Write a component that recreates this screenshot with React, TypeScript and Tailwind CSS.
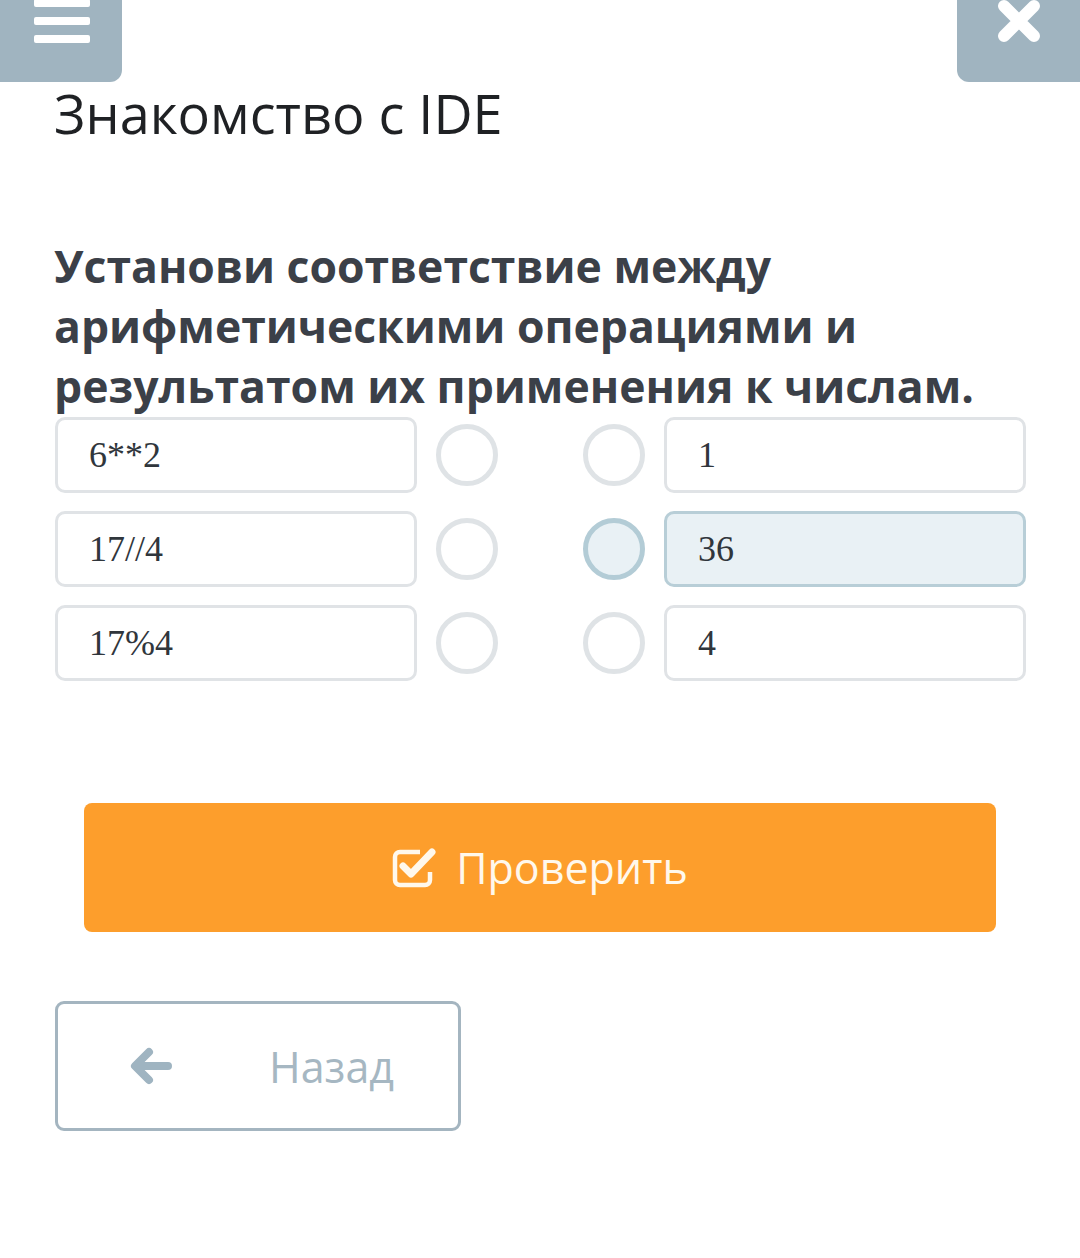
import React from 'react';

const rows = [
  { left: '6**2', right: '1', active: false },
  { left: '17//4', right: '36', active: true },
  { left: '17%4', right: '4', active: false },
];

function Circle({ active }: { active: boolean }) {
  return (
    <div
      className={`w-[62px] h-[62px] shrink-0 rounded-full border-[5px] ${
        active ? 'border-[#b3ccd6] bg-[#e9f1f5]' : 'border-[#dfe3e6] bg-white'
      }`}
    />
  );
}

function Cell({ text, active }: { text: string; active: boolean }) {
  return (
    <div
      className={`w-[362px] h-[76px] shrink-0 flex items-center pl-[31px] rounded-[10px] border-[3px] text-[36px] text-[#30363c] ${
        active ? 'border-[#b8ced7] bg-[#e9f1f5]' : 'border-[#e0e3e6] bg-white'
      }`}
      style={{ fontFamily: '"Liberation Serif", serif' }}
    >
      {text}
    </div>
  );
}

export default function App() {
  return (
    <div
      className="w-[1080px] min-h-[1258px] bg-white"
      style={{ fontFamily: '"Open Sans", sans-serif' }}
    >
      {/* top bar */}
      <div className="flex justify-between">
        <div className="w-[122px] h-[82px] bg-[#a0b4c0] rounded-br-[12px] flex flex-col items-center gap-[10px]">
          <div className="w-[56px] h-[8px] -mt-[1px] bg-white rounded-[2px] ml-[2px]" />
          <div className="w-[56px] h-[8px] bg-white rounded-[2px] ml-[2px]" />
          <div className="w-[56px] h-[8px] bg-white rounded-[2px] ml-[2px]" />
        </div>
        <div className="w-[123px] h-[82px] bg-[#a0b4c0] rounded-bl-[12px] flex justify-center">
          <svg width="50" height="50" viewBox="0 0 50 50" className="-mt-[1px]">
            <path d="M10 7 L40 37 M40 7 L10 37" stroke="#fff" strokeWidth="12" strokeLinecap="round" />
          </svg>
        </div>
      </div>

      <div className="px-[54px]">
        <h1 className="mt-[1px] text-[54px] leading-[60px] font-normal text-[#1f2124]">
          Знакомство с IDE
        </h1>

        <p className="mt-[93px] text-[44.5px] leading-[60px] font-bold text-[#3b4048] w-[972px]">
          Установи соответствие между арифметическими операциями и результатом их применения к числам.
        </p>
      </div>

      <div className="pl-[55px] mt-[1px] flex flex-col gap-[18px]">
        {rows.map((r) => (
          <div key={r.left} className="flex items-center">
            <Cell text={r.left} active={false} />
            <div className="ml-[19px]">
              <Circle active={false} />
            </div>
            <div className="ml-[85px]">
              <Circle active={r.active} />
            </div>
            <div className="ml-[19px]">
              <Cell text={r.right} active={r.active} />
            </div>
          </div>
        ))}
      </div>

      <div className="px-[84px] mt-[122px]">
        <button className="w-[912px] h-[129px] rounded-[8px] bg-[#fd9e2c] flex items-center justify-center gap-[18px] text-[#fff8ec] text-[43px]">
          <svg width="46" height="44" viewBox="0 0 46 44" className="mt-[-4px]">
            <path
              d="M28 8 H8 A5 5 0 0 0 3 13 V36 A5 5 0 0 0 8 41 H33 A5 5 0 0 0 38 36 V28"
              fill="none"
              stroke="#fff8ec"
              strokeWidth="4.5"
            />
            <path
              d="M11 22 L19 30 L40 8"
              fill="none"
              stroke="#fff8ec"
              strokeWidth="7"
              strokeLinecap="round"
              strokeLinejoin="round"
            />
          </svg>
          <span className="leading-none">Проверить</span>
        </button>
      </div>

      <div className="px-[55px] mt-[69px]">
        <button className="w-[406px] h-[130px] rounded-[9px] border-[3px] border-[#a4b5c0] bg-white flex items-center pl-[70px] text-[43px] text-[#a6b7c2]">
          <svg width="46" height="40" viewBox="0 0 46 40">
            <path
              d="M40 20 H8 M21 6 L7 20 L21 34"
              fill="none"
              stroke="#9fb4c1"
              strokeWidth="8"
              strokeLinecap="round"
              strokeLinejoin="round"
            />
          </svg>
          <span className="ml-[95px] leading-none">Назад</span>
        </button>
      </div>
    </div>
  );
}
